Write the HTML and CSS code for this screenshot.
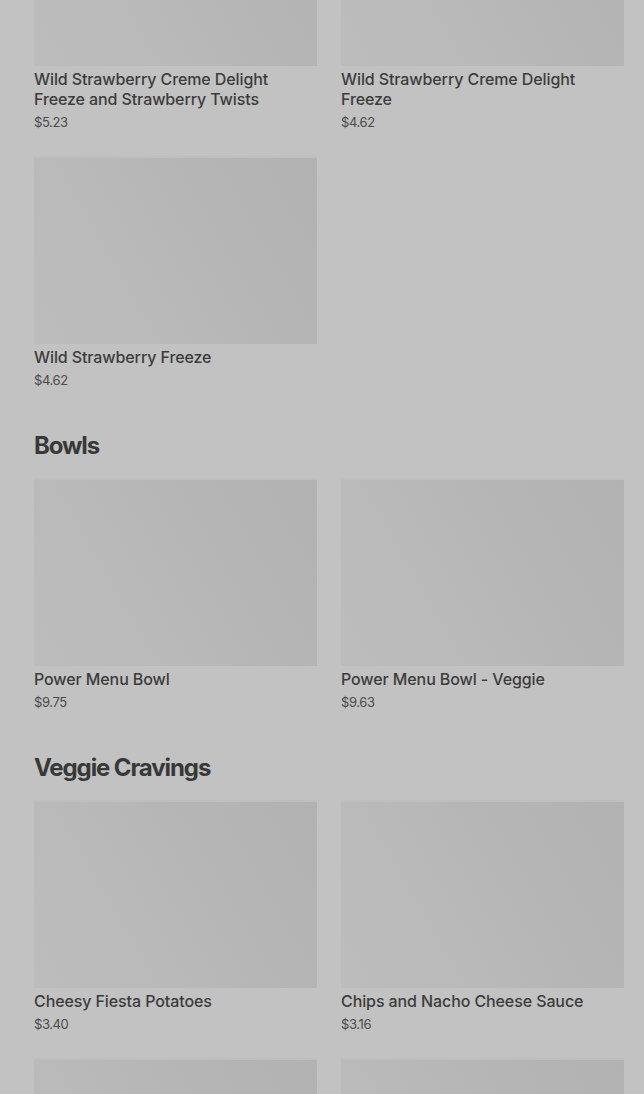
FILE: index.html
```html
<!DOCTYPE html>
<html lang="en">
<head>
  <meta charset="UTF-8" />
  <meta name="viewport" content="width=device-width, initial-scale=1.0"/>
  <title>Menu</title>
  <link rel="stylesheet" href="styles.css">
</head>
<body>
  <div class="menu">
    <section class="category">
      <div class="items">
        <div class="item">
          <div class="thumb"></div>
          <div class="name">Wild Strawberry Creme Delight Freeze and Strawberry Twists</div>
          <div class="price">$5.23</div>
        </div>
        <div class="item">
          <div class="thumb"></div>
          <div class="name">Wild Strawberry Creme Delight Freeze</div>
          <div class="price">$4.62</div>
        </div>
        <div class="item">
          <div class="thumb"></div>
          <div class="name">Wild Strawberry Freeze</div>
          <div class="price">$4.62</div>
        </div>
      </div>
    </section>

    <section class="category">
      <h2>Bowls</h2>
      <div class="items">
        <div class="item">
          <div class="thumb"></div>
          <div class="name">Power Menu Bowl</div>
          <div class="price">$9.75</div>
        </div>
        <div class="item">
          <div class="thumb"></div>
          <div class="name">Power Menu Bowl - Veggie</div>
          <div class="price">$9.63</div>
        </div>
      </div>
    </section>

    <section class="category">
      <h2>Veggie Cravings</h2>
      <div class="items">
        <div class="item">
          <div class="thumb"></div>
          <div class="name">Cheesy Fiesta Potatoes</div>
          <div class="price">$3.40</div>
        </div>
        <div class="item">
          <div class="thumb"></div>
          <div class="name">Chips and Nacho Cheese Sauce</div>
          <div class="price">$3.16</div>
        </div>
        <div class="item">
          <div class="thumb"></div>
          <div class="name">Black Bean Chalupa Supreme</div>
          <div class="price">$4.97</div>
        </div>
        <div class="item">
          <div class="thumb"></div>
          <div class="name">Black Bean Crunchwrap Supreme</div>
          <div class="price">$5.89</div>
        </div>
      </div>
    </section>
  </div>
</body>
</html>
```

FILE: styles.css
```css
body {
  margin: 0;
  background: #c2c2c2;
  font-family: Inter, "Noto Sans", sans-serif;
  color: #3a3a3a;
  overflow: hidden;
}
.menu {
  padding: 0 20px 0 34px;
  margin-top: -122px;
}
.category + .category {
  padding-top: 40px;
}
h2 {
  margin: 0 0 16px;
  font-size: 24px;
  line-height: 32px;
  font-weight: 700;
  letter-spacing: -1.1px;
  color: #383838;
}
.items {
  display: grid;
  grid-template-columns: 1fr 1fr;
  column-gap: 24px;
  row-gap: 24px;
}
.thumb {
  height: 188px;
  background: linear-gradient(60deg, #bcbcbc 0%, #b9b9b9 35%, #b5b5b5 65%, #b2b2b2 100%);
  box-shadow: inset 0 2px 0 #bebebe;
}
.name {
  margin-top: 3px;
  font-size: 16px;
  line-height: 20px;
  font-weight: 500;
  letter-spacing: -0.1px;
  color: #3c3c3c;
}
.price {
  margin-top: 4px;
  font-size: 13px;
  line-height: 19px;
  letter-spacing: -0.4px;
  color: #4a4a4a;
}
```
